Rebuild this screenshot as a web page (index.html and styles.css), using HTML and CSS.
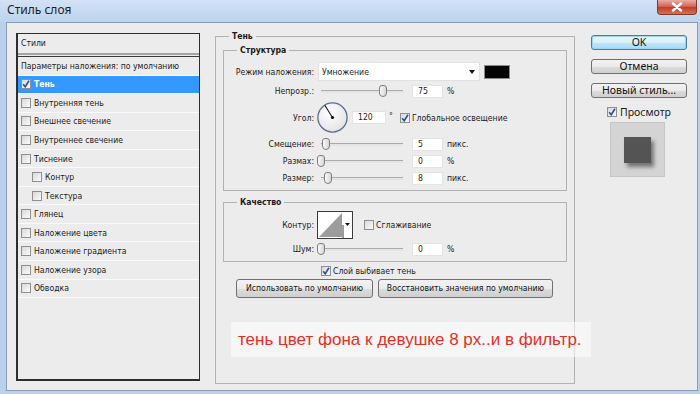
FILE: index.html
```html
<!DOCTYPE html>
<html lang="ru">
<head>
    <meta charset="UTF-8">
    <title>Стиль слоя</title>
    <link rel="stylesheet" href="styles.css">
</head>
<body>
<div class="window">
    <div class="titlebar">
        <span class="title">Стиль слоя</span>
        <span class="close-btn">
            <svg width="12" height="10" viewBox="0 0 12 10"><path d="M2 1.5l8 7M10 1.5l-8 7" stroke="#fff" stroke-width="2.4" stroke-linecap="round"/></svg>
        </span>
    </div>
    <div class="frame">
        <div class="client">

            <div class="styles-panel">
                <div class="panel-head">Стили</div>
                <div class="panel-sep"></div>
                <div class="style-row">Параметры наложения: по умолчанию</div>
                <div class="style-row selected"><span class="cb"><svg viewBox="0 0 8 8"><path d="M1.2 4.2l2 2.6 3.8-6"/></svg></span>Тень</div>
                <div class="style-row"><span class="cb"></span>Внутренняя тень</div>
                <div class="style-row"><span class="cb"></span>Внешнее свечение</div>
                <div class="style-row"><span class="cb"></span>Внутреннее свечение</div>
                <div class="style-row"><span class="cb"></span>Тиснение</div>
                <div class="style-row sub"><span class="cb"></span>Контур</div>
                <div class="style-row sub"><span class="cb"></span>Текстура</div>
                <div class="style-row"><span class="cb"></span>Глянец</div>
                <div class="style-row"><span class="cb"></span>Наложение цвета</div>
                <div class="style-row"><span class="cb"></span>Наложение градиента</div>
                <div class="style-row"><span class="cb"></span>Наложение узора</div>
                <div class="style-row"><span class="cb"></span>Обводка</div>
            </div>

            <fieldset class="group main-group">
                <legend>Тень</legend>

                <fieldset class="group inner-group structure">
                    <legend>Структура</legend>
                    <div class="field-row tall">
                        <span class="field-label">Режим наложения:</span>
                        <div class="select">Умножение<span class="arrow"></span></div>
                        <span class="swatch"></span>
                    </div>
                    <div class="field-row">
                        <span class="field-label">Непрозр.:</span>
                        <div class="slider"><span class="thumb" style="left: 75%"></span></div>
                        <span class="num">75</span>
                        <span class="unit">%</span>
                    </div>
                    <div class="field-row angle-row">
                        <span class="field-label">Угол:</span>
                        <svg class="dial" width="31" height="31" viewBox="0 0 31 31">
                            <defs>
                                <radialGradient id="dialFill" cx="40%" cy="35%" r="70%">
                                    <stop offset="0" stop-color="#ffffff"/>
                                    <stop offset="1" stop-color="#e2e2e2"/>
                                </radialGradient>
                            </defs>
                            <circle cx="15.5" cy="15.5" r="14.6" fill="url(#dialFill)" stroke="#5b6d92" stroke-width="1.3"/>
                            <line x1="15.5" y1="15.5" x2="7.8" y2="3.2" stroke="#1e1e1e" stroke-width="1.2"/>
                            <circle cx="15.5" cy="15.5" r="1.6" fill="#111"/>
                        </svg>
                        <span class="num wide">120</span>
                        <span class="deg">°</span>
                        <span class="cb"><svg viewBox="0 0 8 8"><path d="M1.2 4.2l2 2.6 3.8-6"/></svg></span>
                        <span class="cb-text">Глобальное освещение</span>
                    </div>
                    <div class="field-row">
                        <span class="field-label">Смещение:</span>
                        <div class="slider"><span class="thumb" style="left: 6%"></span></div>
                        <span class="num">5</span>
                        <span class="unit">пикс.</span>
                    </div>
                    <div class="field-row">
                        <span class="field-label">Размах:</span>
                        <div class="slider"><span class="thumb" style="left: 0%"></span></div>
                        <span class="num">0</span>
                        <span class="unit">%</span>
                    </div>
                    <div class="field-row">
                        <span class="field-label">Размер:</span>
                        <div class="slider"><span class="thumb" style="left: 9%"></span></div>
                        <span class="num">8</span>
                        <span class="unit">пикс.</span>
                    </div>
                </fieldset>

                <fieldset class="group inner-group quality">
                    <legend>Качество</legend>
                    <div class="field-row contour-row">
                        <span class="field-label">Контур:</span>
                        <svg class="contour" width="36" height="28" viewBox="0 0 36 28">
                            <rect x="0.5" y="0.5" width="35" height="27" fill="#fff" stroke="#3a3a3a"/>
                            <polygon points="2,26 25,2 25,26" fill="#9c9c9c"/>
                            <line x1="26" y1="14" x2="26" y2="27" stroke="#3a3a3a"/>
                            <polygon points="28,12 33,12 30.5,15" fill="#111"/>
                        </svg>
                        <span class="cb"></span>
                        <span class="cb-text">Сглаживание</span>
                    </div>
                    <div class="field-row">
                        <span class="field-label">Шум:</span>
                        <div class="slider"><span class="thumb" style="left: 0%"></span></div>
                        <span class="num">0</span>
                        <span class="unit">%</span>
                    </div>
                </fieldset>

                <div class="knockout">
                    <span class="cb"><svg viewBox="0 0 8 8"><path d="M1.2 4.2l2 2.6 3.8-6"/></svg></span>
                    <span class="cb-text">Слой выбивает тень</span>
                </div>
                <div class="default-buttons">
                    <span class="btn small use-default">Использовать по умолчанию</span>
                    <span class="btn small reset-default">Восстановить значения по умолчанию</span>
                </div>
            </fieldset>

            <div class="side">
                <span class="btn default">OK</span>
                <span class="btn">Отмена</span>
                <span class="btn">Новый стиль...</span>
                <div class="preview-check">
                    <span class="cb"><svg viewBox="0 0 8 8"><path d="M1.2 4.2l2 2.6 3.8-6"/></svg></span>
                    <span>Просмотр</span>
                </div>
                <div class="preview">
                    <div class="preview-square"></div>
                </div>
            </div>

            <div class="note">тень цвет фона к девушке 8 px..и в фильтр.</div>
        </div>
    </div>
</div>
</body>
</html>
```

FILE: styles.css
```css
* {
    box-sizing: border-box;
}

body {
    margin: 0;
    width: 700px;
    height: 394px;
    overflow: hidden;
    font-family: "DejaVu Sans", sans-serif;
    font-stretch: condensed;
    font-size: 8.6px;
    color: #1b1b1b;
}

.window {
    width: 700px;
    height: 394px;
    display: flex;
    flex-direction: column;
    background: #b9d1ec;
}

.titlebar {
    height: 22px;
    display: flex;
    justify-content: space-between;
    align-items: flex-start;
    background: linear-gradient(#d3e2f4, #bcd3ee);
}

.title {
    margin-left: 7px;
    font-family: "Noto Sans", sans-serif;
    font-stretch: normal;
    font-size: 12px;
    line-height: 20px;
    color: #1e1e1e;
}

.close-btn {
    width: 40px;
    height: 15px;
    margin-right: 3px;
    display: flex;
    align-items: center;
    justify-content: center;
    border: 1px solid #7a3a30;
    border-top: none;
    border-radius: 0 0 4px 4px;
    background: linear-gradient(#e9aea4, #d25c4c 50%, #c13b2a 51%, #d5714f);
}

.frame {
    flex: 1;
    display: flex;
    padding: 0 2px 3px 6px;
}

.client {
    flex: 1;
    position: relative;
    display: flex;
    align-items: flex-start;
    padding: 8px 0 0 9px;
    background: #ececec;
    border: 1px solid #8d9db3;
}

/* left list */
.styles-panel {
    width: 184px;
    height: 348px;
    margin-top: 2px;
    border: 1px solid #2e2e2e;
    border-left-width: 2px;
    border-bottom-width: 2px;
}

.panel-head {
    height: 19px;
    line-height: 19px;
    padding-left: 3px;
}

.panel-sep {
    height: 4px;
    border-top: 2px solid #a3a3a3;
    border-bottom: 1px solid #3a3a3a;
}

.style-row {
    height: 18.55px;
    display: flex;
    align-items: center;
    gap: 3px;
    padding-left: 3px;
    border-bottom: 1px solid #fafafa;
}

.style-row.sub {
    padding-left: 14px;
}

.style-row.selected {
    background: #3399ff;
    color: #fff;
    font-weight: bold;
}

.cb {
    width: 10px;
    height: 10px;
    flex: none;
    display: inline-flex;
    align-items: center;
    justify-content: center;
    border: 1px solid #8e8f8f;
    background: linear-gradient(135deg, #d8d8d8, #fbfbfb);
}

.cb svg {
    width: 8px;
    height: 8px;
    fill: none;
    stroke: #2a4fa8;
    stroke-width: 1.6;
}

/* group boxes */
.group {
    margin: 0;
    padding: 0;
    min-width: 0;
    border: 1px solid #b2b2b2;
}

.group legend {
    margin-left: 13px;
    padding: 0 3px;
    font-weight: bold;
    line-height: 11px;
}

.main-group {
    width: 360px;
    height: 353px;
    margin-left: 15px;
}

.inner-group {
    margin: 0 7px;
}

.structure {
    margin-top: 3px;
    padding: 6px 0 5px;
}

.quality {
    margin-top: 6px;
    padding: 3px 0 5px;
}

.field-row {
    display: flex;
    align-items: center;
    height: 14px;
    margin-top: 3px;
}

.field-row.tall {
    height: 19px;
    margin-top: 0;
}

.field-row.angle-row {
    height: 33px;
    margin-top: 3px;
}

.field-row.contour-row {
    height: 28px;
    margin-top: 0;
}

.field-label {
    width: 90px;
    flex: none;
    margin-right: 4px;
    text-align: right;
}

.select {
    width: 162px;
    height: 19px;
    display: flex;
    align-items: center;
    justify-content: space-between;
    padding: 0 4px 0 3px;
    background: #fff;
    border: 1px solid #e1e1e1;
}

.arrow {
    width: 0;
    height: 0;
    border-left: 3.5px solid transparent;
    border-right: 3.5px solid transparent;
    border-top: 4px solid #111;
}

.swatch {
    width: 26px;
    height: 14px;
    margin-left: 4px;
    background: #050505;
    border: 1px solid #8a8a8a;
}

.slider {
    position: relative;
    width: 82px;
    height: 12px;
    margin: 0 9px 0 3px;
}

.slider::before {
    content: "";
    position: absolute;
    left: 0;
    right: 0;
    top: 5px;
    height: 2px;
    border-top: 1px solid #aaaaaa;
    background: #e4e4e4;
}

.thumb {
    position: absolute;
    top: 0;
    width: 8px;
    height: 12px;
    margin-left: -4px;
    border: 1px solid #7d7d7d;
    border-radius: 3px 3px 4px 4px;
    background: linear-gradient(90deg, #fafafa, #d6d6d6);
}

.num {
    width: 31px;
    height: 13px;
    padding-left: 5px;
    line-height: 11px;
    background: #fff;
    border: 1px solid #e3e3e3;
}

.num.wide {
    width: 34px;
    margin-left: 4px;
}

.unit {
    margin-left: 4px;
}

.dial {
    margin-left: -1px;
    flex: none;
}

.deg {
    margin: 0 7px 4px 3px;
}

.cb-text {
    margin-left: 2px;
}

.contour {
    margin-left: -1px;
    margin-right: 11px;
    flex: none;
}

.knockout {
    display: flex;
    align-items: center;
    height: 12px;
    margin-top: 3px;
    padding-left: 105px;
}

.default-buttons {
    display: flex;
    gap: 5px;
    margin-top: 2px;
    padding-left: 20px;
}

/* buttons */
.btn {
    display: block;
    height: 15px;
    text-align: center;
    border: 1px solid #707070;
    border-radius: 3px;
    background: linear-gradient(#f2f2f2, #ebebeb 50%, #dddddd 51%, #cfcfcf);
    font-family: "Noto Sans", sans-serif;
    font-stretch: normal;
    font-size: 10.5px;
    line-height: 13px;
    color: #111;
}

.btn.default {
    border-color: #3c7fb1;
    background: linear-gradient(#eaf6fd, #d9f0fc 50%, #bee6fd 51%, #a7d9f5);
    box-shadow: inset 0 0 0 1px #9ed3f3;
}

.btn.small {
    height: 19px;
    font-family: "DejaVu Sans", sans-serif;
    font-stretch: condensed;
    font-size: 8.6px;
    line-height: 17px;
}

.use-default {
    width: 137px;
}

.reset-default {
    width: 175px;
}

.side {
    width: 96px;
    margin-left: 16px;
    margin-top: 4px;
    display: flex;
    flex-direction: column;
    gap: 9px;
}

.preview-check {
    display: flex;
    align-items: center;
    gap: 3px;
    margin-top: -1px;
    padding-left: 16px;
    font-family: "Noto Sans", sans-serif;
    font-stretch: normal;
    font-size: 10.5px;
    line-height: 12px;
}

.preview {
    width: 55px;
    height: 55px;
    margin: -5px 0 0 19px;
    padding: 14px 0 0 13px;
    background: #d4d4d4;
    border: 1px solid #c6c6c6;
}

.preview-square {
    width: 27px;
    height: 26px;
    background: #545454;
    box-shadow: 3px 4px 4px rgba(0, 0, 0, 0.45);
}

/* annotation over the screenshot */
.note {
    position: absolute;
    left: 224px;
    top: 299px;
    width: 360px;
    height: 35px;
    padding-left: 7px;
    white-space: nowrap;
    background: rgba(255, 255, 255, 0.55);
    font-family: "Liberation Sans", Arial, sans-serif;
    font-stretch: normal;
    font-size: 17px;
    line-height: 35px;
    color: #e22f28;
}
```
